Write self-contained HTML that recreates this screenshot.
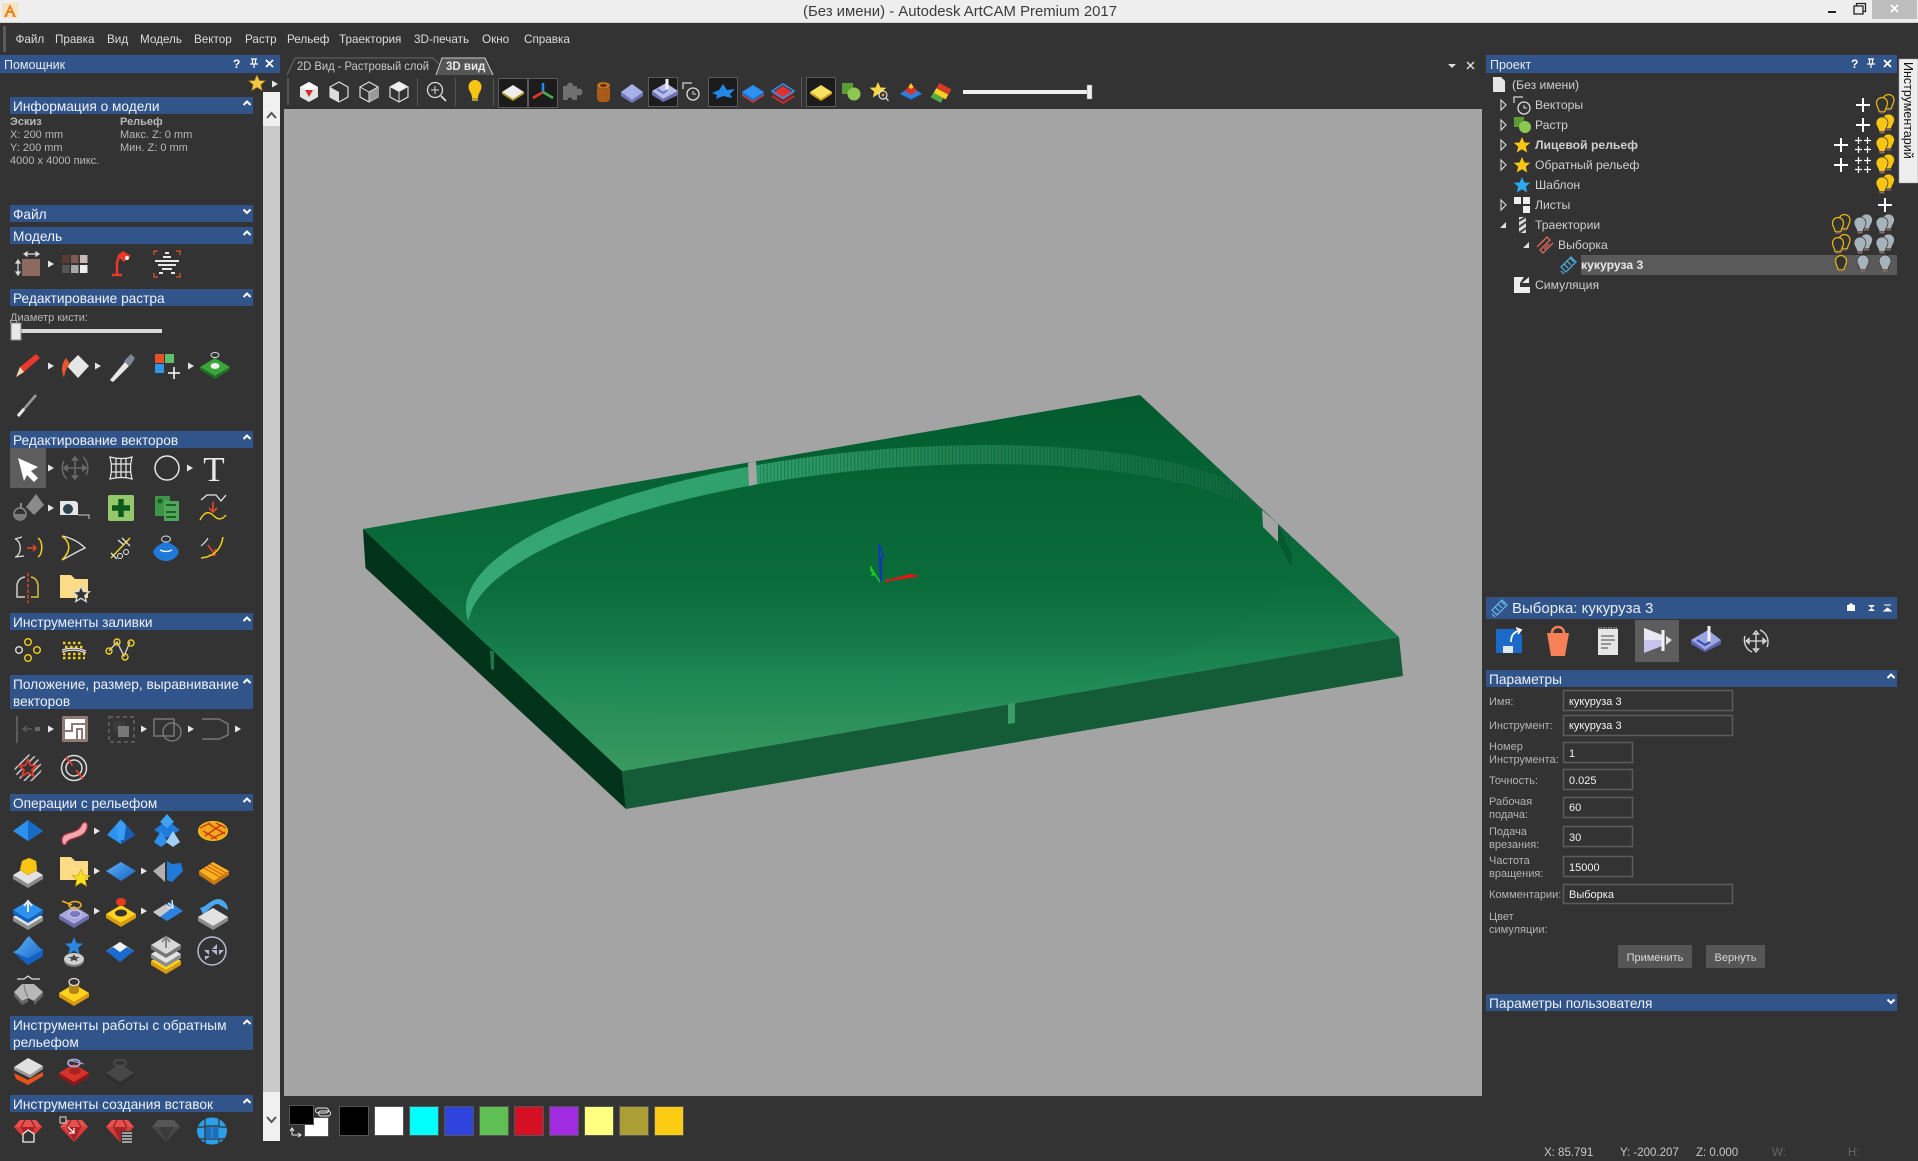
<!DOCTYPE html>
<html lang="ru"><head><meta charset="utf-8"><title>Autodesk ArtCAM Premium 2017</title>
<style>
html,body{margin:0;padding:0;background:#333;width:1918px;height:1161px;overflow:hidden}
svg{display:block;font-family:"Liberation Sans","DejaVu Sans",sans-serif}
.m{font-size:11.7px;fill:#dcdcdc}.h{font-size:13.7px;fill:#eef1f6}.p{font-size:12.5px;fill:#e4e8ee}
.s{font-size:11px;fill:#b8b8b8}.b{font-size:11px;fill:#b8b8b8;font-weight:bold}
.t{font-size:12.2px;fill:#cfcfcf}.l{font-size:11px;fill:#b4b4b4}.v{font-size:11px;fill:#f2f2f2}
.f{fill:none;stroke:#5c5c5c;stroke-width:1.5}
.st{font-size:11.5px;fill:#c8c8c8}
</style></head><body>
<svg width="1918" height="1161" viewBox="0 0 1918 1161">
<defs>
<path id="tri" d="M-3-3.500 3 0-3 3.500z" fill="#e6e6e6"/>
<path id="up" d="M-3.500 2 0-1.500 3.500 2" fill="none" stroke="#fff" stroke-width="2"/>
<path id="dn" d="M-3.500-1.500 0 2 3.500-1.500" fill="none" stroke="#fff" stroke-width="2"/>
<path id="plus" d="M-7 0H7M0-7V7" stroke="#fff" stroke-width="2" fill="none"/>
<path id="plus4" d="M-8-4.500H-1M-4.500-8V-1M1-4.500H8M4.500-8V-1M-8 4.500H-1M-4.500 1V8M1 4.500H8M4.500 1V8" stroke="#fff" stroke-width="1.200" fill="none"/>
<g id="bg"><path d="M-3 5.500C-3 2-6 1-6-3a6 6 0 0 1 12 0C6 1 3 2 3 5.500z" fill="#a6b3ba" stroke="#333" stroke-width=".7"/><rect x="-2.500" y="5.500" width="5" height="2" fill="#8a6a5c"/></g>
<g id="by"><path d="M-3 5.500C-3 2-6 1-6-3a6 6 0 0 1 12 0C6 1 3 2 3 5.500z" fill="#f8c513" stroke="#333" stroke-width=".7"/><rect x="-2.500" y="5.500" width="5" height="2" fill="#8a6a5c"/></g>
<g id="bo"><path d="M-3 5.500C-3 2-5.500 1-5.500-3a5.500 5.500 0 0 1 11 0C5.500 1 3 2 3 5.500z" fill="#333" stroke="#e8b810" stroke-width="1.200"/><rect x="-2.500" y="5.500" width="5" height="2" fill="#8a6a5c"/></g>
<g id="bo2"><use href="#bo" x="3.500" y="-2"/><use href="#bo" x="-3" y="1"/></g>
<g id="by2"><use href="#by" x="3.500" y="-2"/><use href="#by" x="-3" y="1"/></g>
<g id="bg2"><use href="#bg" x="3.500" y="-2"/><use href="#bg" x="-3" y="1"/></g>
<path id="expd" d="M-2-5 3 0-2 5z" fill="#333" stroke="#ddd" stroke-width="1.100"/>
<path id="coll" d="M-3 3 3 3 3-3z" fill="#e0e0e0"/>
<g id="clock"><path d="M-8-3V-9H1" fill="none" stroke="#bbb" stroke-width="1.500"/><circle cx="2" cy="2" r="6" fill="#333" stroke="#ddd" stroke-width="1.300"/><path d="M2-1V2H5" fill="none" stroke="#ddd"/></g>
<path id="star" d="M0-8 2.400-2.500 8.300-2.200 3.800 1.600 5.200 7.500 0 4.300-5.200 7.500-3.800 1.600-8.300-2.200-2.400-2.500z"/>
<path id="gem" d="M-14-4-8-11H8L14-4 0 11z" fill="#d83a38"/>
<g id="gemf"><path d="M-14-4H14L8-11H-8z" fill="#e85050"/><path d="M-7-4 0 11 7-4z" fill="#a82428"/><path d="M-3-11-7-4M3-11 7-4" stroke="#7a1c1c" fill="none"/></g>
<linearGradient id="gt" gradientUnits="userSpaceOnUse" x1="900" y1="395" x2="900" y2="771"><stop offset="0" stop-color="#015a2d"/><stop offset=".36" stop-color="#086838"/><stop offset=".5" stop-color="#0b6c3b"/><stop offset=".64" stop-color="#147a48"/><stop offset=".76" stop-color="#1f8a55"/><stop offset="1" stop-color="#39995f"/></linearGradient>
<linearGradient id="gf" gradientUnits="userSpaceOnUse" x1="900" y1="399" x2="900" y2="775"><stop offset="0" stop-color="#015a2d"/><stop offset=".36" stop-color="#086838"/><stop offset=".5" stop-color="#0b6c3b"/><stop offset=".64" stop-color="#147a48"/><stop offset=".76" stop-color="#1f8a55"/><stop offset="1" stop-color="#39995f"/></linearGradient>
<linearGradient id="gw" gradientUnits="userSpaceOnUse" x1="470" y1="0" x2="1265" y2="0"><stop offset="0" stop-color="#36a876"/><stop offset=".35" stop-color="#2fa06c"/><stop offset=".6" stop-color="#1f8352"/><stop offset="1" stop-color="#0c673b"/></linearGradient>
<pattern id="pst" width="3.500" height="10" patternUnits="userSpaceOnUse"><rect width="1.200" height="10" fill="#054a27" opacity=".35"/></pattern>
<clipPath id="ct"><path d="M363 529 1140 395 1399 637 622 771z"/></clipPath>
<clipPath id="ef"><circle r="1" transform="matrix(412 -34 0 124.400 880 593)"/></clipPath>
<clipPath id="eu"><circle r="1" transform="matrix(412 -34 0 124.400 878 574)"/></clipPath>
<clipPath id="hat"><circle cx="28" cy="768" r="13.500"/></clipPath>
<linearGradient id="blue" x1="0" y1="0" x2="1" y2="1"><stop offset="0" stop-color="#5cb4f8"/><stop offset="1" stop-color="#1560c4"/></linearGradient>
<g id="slabw"><path d="M-15 0 0 9 15 0V4L0 13-15 4z" fill="#8c8c8c"/><path d="M-15 0 0-9 15 0 0 9z" fill="#e2e2e2"/></g>
<g id="slaby"><path d="M-15 0 0 9 15 0V4L0 13-15 4z" fill="#d89a10"/><path d="M-15 0 0-9 15 0 0 9z" fill="#ffd21c"/></g>
<g id="slabb"><path d="M-15 0 0 9 15 0V4L0 13-15 4z" fill="#1263bd"/><path d="M-15 0 0-9 15 0 0 9z" fill="#2b92f0"/></g>
<g id="slabp"><path d="M-15 0 0 9 15 0V4L0 13-15 4z" fill="#6c6caa"/><path d="M-15 0 0-9 15 0 0 9z" fill="#a8a8e0"/></g>
<g id="folder"><path d="M-14-12H-3L1-8H14V11H-14z" fill="#fbdb86"/></g>
</defs>

<!-- base -->
<rect width="1918" height="1161" fill="#333"/>
<rect width="1918" height="23" fill="#eeeeee"/>
<rect y="22" width="1918" height="1" fill="#cfcfcf"/>
<rect x="2" y="3" width="16" height="15" fill="#f6e3c4"/>
<path d="M4 17 10 4 16 17H13L12 13H8L7 17z" fill="#e8841c"/><path d="M9 11h2l-1-3z" fill="#f6e3c4"/>
<text x="960" y="16" text-anchor="middle" font-size="14.500" fill="#3c3c3c" textLength="314" lengthAdjust="spacingAndGlyphs">(Без имени) - Autodesk ArtCAM Premium 2017</text>
<rect x="1828" y="11" width="8" height="2" fill="#222"/>
<path d="M1854 6h9v8h-9zM1856.500 6V3.500h9v8h-2.500" fill="none" stroke="#222" stroke-width="1.300"/>
<rect x="1872" width="45" height="19" fill="#bdbdbd"/><path d="M1891 5l7 7m0-7-7 7" stroke="#fff" stroke-width="1.800"/>

<!-- menu -->
<rect x="3" y="26" width="3" height="26" fill="#5a5a5a"/>
<g>
<text x="15.500" y="43" class="m">Файл</text><text x="55" y="43" class="m">Правка</text><text x="107" y="43" class="m">Вид</text><text x="140" y="43" class="m">Модель</text><text x="194" y="43" class="m">Вектор</text><text x="245" y="43" class="m">Растр</text><text x="287" y="43" class="m">Рельеф</text><text x="339" y="43" class="m">Траектория</text><text x="414" y="43" class="m">3D-печать</text><text x="482" y="43" class="m">Окно</text><text x="524" y="43" class="m">Справка</text>
</g>

<!-- left panel -->
<rect y="55" width="280" height="18" fill="#31558a"/>
<text x="4" y="69" class="p">Помощник</text>
<text x="233" y="68" font-size="12" font-weight="bold" fill="#fff">?</text>
<path d="M251 59h6M252.500 59v5h3v-5M250 64h8M254 64v4" stroke="#fff" stroke-width="1.200" fill="none"/>
<path d="M266 60l7 7m0-7-7 7" stroke="#fff" stroke-width="1.800"/>
<use href="#star" transform="translate(257 83)" fill="#f3c845" stroke="#a87a18" stroke-width=".6"/>
<use href="#tri" x="275" y="84"/>

<!-- scrollbar -->
<rect x="263" y="92" width="17" height="1049" fill="#c9c9c9"/>
<rect x="263" y="92" width="17" height="34" fill="#f0f0f0"/>
<rect x="263" y="1092" width="17" height="49" fill="#f0f0f0"/>
<path d="M267 118l4.500-5 4.500 5" fill="none" stroke="#555" stroke-width="2"/>
<path d="M267 1117l4.500 5 4.500-5" fill="none" stroke="#555" stroke-width="2"/>

<!-- section headers -->
<g fill="#31558a">
<rect x="10" y="97" width="243" height="17"/><rect x="10" y="205" width="243" height="17"/><rect x="10" y="227" width="243" height="17"/><rect x="10" y="289" width="243" height="17"/><rect x="10" y="431" width="243" height="17"/><rect x="10" y="613" width="243" height="17"/><rect x="10" y="675" width="243" height="34"/><rect x="10" y="794" width="243" height="17"/><rect x="10" y="1016" width="243" height="34"/><rect x="10" y="1095" width="243" height="17"/>
</g>
<text x="13" y="111" class="h">Информация о модели</text>
<text x="13" y="219" class="h">Файл</text>
<text x="13" y="241" class="h">Модель</text>
<text x="13" y="303" class="h">Редактирование растра</text>
<text x="13" y="445" class="h">Редактирование векторов</text>
<text x="13" y="627" class="h">Инструменты заливки</text>
<text x="13" y="689" class="h">Положение, размер, выравнивание</text>
<text x="13" y="706" class="h">векторов</text>
<text x="13" y="808" class="h">Операции с рельефом</text>
<text x="13" y="1030" class="h">Инструменты работы с обратным</text>
<text x="13" y="1047" class="h">рельефом</text>
<text x="13" y="1109" class="h">Инструменты создания вставок</text>
<use href="#up" x="247" y="103"/><use href="#dn" x="247" y="211"/><use href="#up" x="247" y="233"/><use href="#up" x="247" y="295"/><use href="#up" x="247" y="437"/><use href="#up" x="247" y="619"/><use href="#up" x="247" y="681"/><use href="#up" x="247" y="800"/><use href="#up" x="247" y="1022"/><use href="#up" x="247" y="1101"/>

<!-- info -->
<text x="10" y="125" class="b">Эскиз</text><text x="120" y="125" class="b">Рельеф</text>
<text x="10" y="138" class="s">X: 200 mm</text><text x="120" y="138" class="s">Макс. Z: 0 mm</text>
<text x="10" y="151" class="s">Y: 200 mm</text><text x="120" y="151" class="s">Мин. Z: 0 mm</text>
<text x="10" y="164" class="s">4000 x 4000 пикс.</text>

<!-- model row -->
<rect x="22" y="259" width="18" height="17" fill="#8a6a5e"/>
<path d="M24 254H39M24 254l3-2v4zM39 254l-3-2v4zM18 260V275M18 260l-2 3h4zM18 275l-2-3h4z" stroke="#d8d8d8" fill="#d8d8d8" stroke-width="1.200"/>
<use href="#tri" x="51" y="264"/>
<rect x="62" y="255" width="7.500" height="8" fill="#5b3a33"/><rect x="71" y="255" width="7.500" height="8" fill="#7e5a50"/><rect x="80" y="255" width="7.500" height="8" fill="#c9b8b4"/>
<rect x="62" y="265" width="7.500" height="8" fill="#555"/><rect x="71" y="265" width="7.500" height="8" fill="#a8a8a8"/><rect x="80" y="265" width="7.500" height="8" fill="#eee"/>
<path d="M112 275H122M117 275V262L120 254" stroke="#e8392a" stroke-width="2.500" fill="none"/><path d="M117 256 123 251 131 256 124 262z" fill="#e8392a"/><circle cx="127" cy="258" r="2" fill="#eee"/>
<path d="M154 255V251H158M176 251H180V255M154 273V277H158M176 277H180V273" stroke="#e2542a" stroke-width="1.300" fill="none"/>
<path d="M165 253h4M163 257h8M155 261h24M158 265h18M162 269h10M159 273h4M171 273h4" stroke="#e8e8e8" stroke-width="2"/>

<!-- raster -->
<text x="10" y="321" class="s">Диаметр кисти:</text>
<rect x="12" y="329" width="150" height="4" fill="#d8d8d8"/>
<rect x="11" y="323" width="10" height="17" fill="#e8e8e8" stroke="#888"/>
<path d="M16 377 20 367 36 354 40 358 24 372z" fill="#e8392a"/><path d="M16 377 20 367 24 372z" fill="#e8d8b0"/>
<use href="#tri" x="51" y="366"/>
<path d="M67 366 78 355 89 366 78 378z" fill="#e6e6e6"/><path d="M66 358C60 366 62 372 64 378 65 372 66 368 70 364z" fill="#e4572a"/>
<use href="#tri" x="98" y="366"/>
<path d="M110 380 125 362 129 366 113 382z" fill="#e8e8e8" stroke="#aaa" stroke-width=".5"/><path d="M124 361 131 354 135 358 130 366z" fill="#7a8a92"/>
<rect x="155" y="354" width="9" height="9" fill="#e6512a"/><rect x="165" y="354" width="9" height="9" fill="#5fbf6a"/><rect x="155" y="364" width="9" height="9" fill="#2f96e8"/>
<path d="M174 367V379M168 373H180" stroke="#fff" stroke-width="1.500"/>
<use href="#tri" x="191" y="366"/>
<path d="M200 367 215 358 230 367 215 376z" fill="#3aa53a"/><path d="M200 367 215 376 230 367V370L215 379 200 370z" fill="#1e6c26"/><ellipse cx="215" cy="366" rx="4.500" ry="3" fill="#eee"/><ellipse cx="215" cy="355" rx="4" ry="2.500" fill="none" stroke="#ddd"/>
<path d="M18 416 36 395" stroke="#9a9a9a" stroke-width="2.500"/><path d="M18 416 24 409" stroke="#eee" stroke-width="3"/>

<!-- vector row1 -->
<rect x="10" y="448" width="36" height="40" fill="#5d5d5d"/>
<path d="M18 458 38 467 31 471 38 478 34 482 27 475 24 481z" fill="#fff"/>
<use href="#tri" x="51" y="468"/>
<g stroke="#6a6a6a" stroke-width="1.500" fill="none"><path d="M75 458V478M65 468H85M75 457l-2.500 3h5zM75 479l-2.500-3h5zM64 468l3-2.500v5zM86 468l-3-2.500v5z"/><path d="M83 457A15 15 0 0 1 86 475M67 479A15 15 0 0 1 64 461"/></g>
<g stroke="#e8e8e8" stroke-width="1.200" fill="none"><path d="M110 457C117 459 126 459 132 457 130 465 130 472 132 479 126 477 117 477 110 479 112 472 112 465 110 457z"/><path d="M111 464H131M111 472H131M116 458V478M121 458V478M126 458V478"/></g>
<circle cx="167" cy="468" r="12" fill="none" stroke="#e6e6e6" stroke-width="1.500"/>
<use href="#tri" x="190" y="468"/>
<text x="214" y="481" text-anchor="middle" font-family="Liberation Serif,serif" font-size="35" fill="#e8e8e8">T</text>

<!-- row 2 -->
<path d="M26 507 36 494 44 505 34 515z" fill="#8a8a8a"/><path d="M21 503V513" stroke="#8a8a8a" stroke-width="2"/><circle cx="20" cy="514" r="6" fill="#333" stroke="#8a8a8a" stroke-width="1.500"/><path d="M14 514a6 6 0 0 0 12 0z" fill="#7a7a7a"/>
<use href="#tri" x="51" y="508"/>
<path d="M60 501H74Q78 501 78 505V515H60z" fill="#e6e6e6"/><circle cx="68" cy="509" r="5" fill="#2c4250"/><path d="M78 515H89V519" stroke="#aaa" fill="none" stroke-width="1.300"/>
<rect x="108" y="495" width="26" height="26" rx="2" fill="#95c86c"/><path d="M121 499V517M112 508H130" stroke="#0c5a1c" stroke-width="5.500"/>
<rect x="155" y="496" width="15" height="20" fill="#3d9548"/><rect x="164" y="501" width="15" height="20" fill="#4fa85a"/><circle cx="160" cy="501" r="2.500" fill="#1e6028"/><path d="M166 505h10M166 512h10M166 517h10" stroke="#1e6028" stroke-width="2"/>
<path d="M201 500 207 495H216L221 501 226 495" stroke="#e6e6e6" stroke-width="1.300" fill="none"/><path d="M213 502V512M209 508l4 4 4-4" stroke="#e8482a" stroke-width="1.600" fill="none"/><path d="M200 520C205 510 210 512 214 516S222 520 226 515" stroke="#f2d21c" stroke-width="1.400" fill="none"/>

<!-- row 3 -->
<path d="M15 539C22 541 22 555 15 557M15 539 22 537M15 557 24 556" stroke="#ddd" stroke-width="1.300" fill="none"/><path d="M27 548H36M33 545l3 3-3 3" stroke="#e8482a" stroke-width="1.500" fill="none"/><path d="M38 538C43 541 43 554 38 557" stroke="#f2d21c" stroke-width="1.500" fill="none"/>
<path d="M62 536C72 538 80 543 85 548 78 551 70 556 62 560" stroke="#e6e6e6" stroke-width="1.300" fill="none"/><path d="M62 536C70 542 72 550 62 560" stroke="#f2d21c" stroke-width="1.500" fill="none"/>
<path d="M111 558 130 538" stroke="#f2d21c" stroke-width="1.500"/><path d="M122 538l8 8M111 553l6 6M118 540l6 5" stroke="#e6e6e6" stroke-width="1.300"/><circle cx="126" cy="552" r="2.500" fill="none" stroke="#e6e6e6"/><circle cx="120" cy="556" r="2.500" fill="none" stroke="#e6e6e6"/>
<path d="M153 552C155 546 161 544 166 541 171 544 177 546 179 552 177 558 171 561 166 561S155 558 153 552z" fill="#1f79d8"/><path d="M160 550Q166 553 172 550" stroke="#fff" stroke-width="1.300" fill="none"/><ellipse cx="166" cy="539" rx="4.500" ry="3" fill="none" stroke="#ddd"/>
<path d="M201 546C204 543 206 542 208 538" stroke="#ddd" stroke-width="1.200" fill="none"/><path d="M208 545 215 555M215 549V555H209" stroke="#e8482a" stroke-width="1.500" fill="none"/><path d="M201 558C213 557 221 550 223 537" stroke="#f2d21c" stroke-width="1.500" fill="none"/>

<!-- row 4 -->
<path d="M28 573V603" stroke="#c8401c" stroke-width="1.800" stroke-dasharray="3.500 2"/><path d="M25 597H17V585Q18 578 25 577" stroke="#cfcfcf" stroke-width="1.500" fill="none"/><path d="M31 597H38V585Q37 578 31 577" stroke="#d8c040" stroke-width="1.500" fill="none"/>
<use href="#folder" transform="translate(74 587)"/><use href="#star" transform="translate(81 594)" fill="#333" stroke="#ddd" stroke-width="1.300"/>

<!-- fill tools -->
<g fill="none" stroke-width="1.400"><circle cx="19" cy="650" r="3.300" stroke="#ddd"/><circle cx="28" cy="642" r="3.300" stroke="#f2d21c"/><circle cx="37" cy="650" r="3.300" stroke="#f2d21c"/><circle cx="28" cy="658" r="3.300" stroke="#f2d21c"/>
<path d="M62 650Q74 646 86 651" stroke="#ddd"/><path d="M62 652Q74 648 86 653" stroke="#ddd"/>
<path d="M109 651 117 642 124 656 130 642" stroke="#ccc"/><circle cx="109" cy="651" r="3" stroke="#f2d21c"/><circle cx="117" cy="642" r="3" stroke="#f2d21c"/><circle cx="125" cy="657" r="3" stroke="#f2d21c"/><circle cx="131" cy="643" r="3" stroke="#f2d21c"/></g>
<path d="M63 643h20M65 647h20M63 654h22M63 658h22" stroke="#f2d21c" stroke-width="2.600" stroke-dasharray="2.500 2.500"/>

<!-- position row -->
<path d="M17 716V743" stroke="#6a6a6a" stroke-width="1.500"/><path d="M32 729H24M27 726l-4 3 4 3" stroke="#5f5f5f" stroke-width="1.300" fill="none"/><rect x="35" y="727" width="5" height="4" fill="#6a6a6a"/>
<use href="#tri" x="51" y="729"/>
<rect x="62" y="716" width="26" height="26" rx="1.500" fill="#8f7a73"/><rect x="65" y="719" width="20" height="20" fill="#fff"/><path d="M65 731H72V724H85M77 739V729H82V739" stroke="#8f7a73" stroke-width="2" fill="none"/>
<rect x="109" y="717" width="25" height="25" fill="none" stroke="#666" stroke-width="1.500" stroke-dasharray="4 3"/><rect x="113" y="721" width="12" height="12" fill="#3c3c3c"/><rect x="118" y="726" width="11" height="11" fill="#777"/>
<use href="#tri" x="144" y="729"/>
<rect x="154" y="719" width="20" height="17" fill="none" stroke="#777" stroke-width="1.500"/><circle cx="172" cy="732" r="9" fill="none" stroke="#777" stroke-width="1.500"/>
<use href="#tri" x="191" y="729"/>
<path d="M202 719H219L228 724V735L219 739H202" stroke="#777" stroke-width="1.500" fill="none"/>
<use href="#tri" x="238" y="729"/>
<g clip-path="url(#hat)"><path d="M14 770 30 754M14 777 37 754M17 781 42 756M22 783 43 762M29 783 43 769" stroke="#ccc" stroke-width="1.500"/></g><use href="#star" transform="translate(28 768) scale(1.050)" fill="#333" stroke="#e83a2a" stroke-width="1.600"/>
<g fill="none" stroke="#ddd" stroke-width="1.500"><circle cx="74" cy="768" r="12.500"/><circle cx="74" cy="768" r="8"/></g><path d="M66 757 83 779" stroke="#e83a2a" stroke-width="1.800"/><path d="M72 766 76 770" stroke="#333" stroke-width="3"/>

<!-- ops row 1 y=831 -->
<path d="M13 831 28 820 43 831 28 841z" fill="#2c90ee"/><path d="M28 820 43 831 28 841z" fill="#176cc6"/>
<path d="M62 840C62 830 78 836 82 824 86 820 88 824 87 828 84 840 68 836 66 844 64 846 62 844 62 840z" fill="#f0a8ae" stroke="#b83444" stroke-width="1.200"/>
<use href="#tri" x="97" y="831"/>
<path d="M107 835 121 819 135 835 121 844z" fill="#2c90ee"/><path d="M121 819 135 835 121 844z" fill="#155db8"/><path d="M116 826Q121 816 126 826L124 840H118z" fill="#3c9cf2"/>
<path d="M154 830 167 820 180 830 167 838z" fill="#1f7ada"/><path d="M160 822 167 814 174 822 167 828z" fill="#3fa2f6"/><path d="M154 842 161 831 168 842 161 847z" fill="#2c90ee"/><path d="M166 842 173 831 180 842 173 847z" fill="#a5d0f6"/>
<g transform="translate(213 831)"><ellipse rx="14.500" ry="9.500" fill="#f2a81c"/><path d="M-13-3-3-8M-8 5 8-6M-2 8 12 1M-10 0 4 8M-4-7 12 3M3-8 13-3" stroke="#c83c10" stroke-width="1.500"/><ellipse rx="14.500" ry="9.500" fill="none" stroke="#f8c220"/></g>

<!-- ops row 2 y=871 -->
<use href="#slabw" transform="translate(28 875)"/><path d="M20 870 22 861 29 858 36 861 37 870 28 875z" fill="#f8c513" stroke="#c89410" stroke-width=".5"/>
<use href="#folder" transform="translate(74 869)"/><use href="#star" transform="translate(81 878) scale(1.100)" fill="#f8de20" stroke="#b89410" stroke-width=".5"/>
<use href="#tri" x="97" y="871"/>
<path d="M106 871 121 862 136 871 121 881z" fill="url(#blue)"/>
<use href="#tri" x="144" y="871"/>
<path d="M153 871 165 862V882z" fill="#b0b0b0"/><path d="M167 861 172 864 181 863 183 871 172 882 167 880z" fill="#1f7ada"/>
<path d="M199 871 213 862 229 871 214 881z" fill="#f8b420"/><path d="M199 871 214 881V885L199 875zM229 871 214 881V885L229 875z" fill="#c87810"/><path d="M204 868 220 877M207 866 223 875M210 864 226 873" stroke="#d86010" stroke-width="1.200"/>

<!-- ops row 3 y=911 -->
<use href="#slabw" transform="translate(28 917)"/><use href="#slabb" transform="translate(28 910)"/><path d="M28 912V902M24 906l4-5 4 5" stroke="#e8e8e8" stroke-width="2" fill="none"/>
<use href="#slabp" transform="translate(74 915)"/><ellipse cx="75" cy="914" rx="6" ry="3.500" fill="#7a7ac0" stroke="#eee" stroke-width=".6"/><ellipse cx="75" cy="905" rx="6" ry="3.500" fill="none" stroke="#f2b21c" stroke-width="1.500"/><path d="M62 901 72 905" stroke="#f2b21c" stroke-width="1.500"/>
<use href="#tri" x="97" y="911"/>
<use href="#slaby" transform="translate(121 914)"/><ellipse cx="121" cy="913" rx="6" ry="3.500" fill="#333"/><ellipse cx="121" cy="902" rx="5" ry="4" fill="#e83a1c"/>
<use href="#tri" x="144" y="911"/>
<path d="M153 912 170 902 183 911 167 921z" fill="#2b82e0"/><path d="M153 912 166 904 172 908 160 917z" fill="#c8c8c8"/><path d="M168 903 173 907M172 900l1 8-6-1" stroke="#eee" stroke-width="1.300" fill="none"/>
<use href="#slabw" transform="translate(213 917)"/><path d="M200 908C206 907 210 900 218 899 224 899 228 905 228 910L218 904C212 904 208 912 203 914z" fill="#4ca8f2"/>

<!-- ops row 4 y=950 -->
<path d="M13 952C20 950 24 940 29 936 33 940 37 946 43 950V956L28 965z" fill="url(#blue)"/>
<path d="M28 965 43 956V950L28 958 13 952z" fill="#1560c4"/>
<use href="#star" transform="translate(74 946) scale(1.100)" fill="#2b86e2"/><ellipse cx="74" cy="959" rx="10" ry="6" fill="#cfcfcf"/><path d="M64 959a10 6 0 0 0 20 0V961a10 6 0 0 1-20 0z" fill="#777"/><use href="#star" transform="translate(74 958) scale(.7 .45)" fill="#444"/>
<path d="M106 951 120 942 134 951 120 960z" fill="#eee"/><path d="M106 951 113 947 120 951 127 947 134 951 120 962z" fill="#1a6ad0"/><path d="M113 947 120 942 127 947 120 952z" fill="#f2f2f2"/>
<use href="#slaby" transform="translate(166 961)"/><use href="#slabw" transform="translate(166 954)"/><path d="M151 945 166 936 181 945 166 954z" fill="#d8d8d8"/><path d="M151 945 166 954 181 945V949L166 958 151 949z" fill="#777"/><path d="M166 948V938M162 942l4-5 4 5" stroke="#888" stroke-width="2" fill="none"/>
<circle cx="212" cy="951" r="14" fill="none" stroke="#b8b8d8" stroke-width="1.500"/><path d="M204 950h5v5zM211 950h6v5zM205 956h5l-5 4zM212 956h6zM217 944v5h-5zM219 950h5l-5 5z" fill="#b8b8d8"/>

<!-- ops row 5 y=990 -->
<path d="M14 992 22 984H34L43 992 34 1001 28 998 22 1001z" fill="#b8b8b8"/><path d="M14 992 22 1001 28 998V1002L22 1005 14 996zM43 992 34 1001V1005L43 996z" fill="#666"/><path d="M17 979H24L28 976 32 979H40" stroke="#ddd" stroke-width="1.300" fill="none"/><path d="M24 984Q24 990 28 997" stroke="#777" fill="none"/>
<use href="#slaby" transform="translate(74 993)"/><ellipse cx="74" cy="991" rx="5" ry="3" fill="#a87818"/><path d="M69 982V990a5 3 0 0 0 10 0V982" fill="#b88418"/><ellipse cx="74" cy="982" rx="5" ry="3.500" fill="#333" stroke="#ddd" stroke-width="1.300"/>

<!-- reverse -->
<path d="M14 1067 28 1058 43 1066 30 1075z" fill="#e0e0e0"/><path d="M14 1067 30 1075V1078L14 1070zM43 1066 30 1075V1078L43 1069z" fill="#999"/><path d="M14 1073 28 1080 43 1072V1076L28 1085 16 1079z" fill="#e8501c"/>
<path d="M59 1073 74 1064 89 1073 74 1082z" fill="#d8322a"/><path d="M59 1073 74 1082 89 1073V1077L74 1086 59 1077z" fill="#8a1a1a"/><ellipse cx="75" cy="1071" rx="6" ry="3.500" fill="#a82420"/><ellipse cx="74" cy="1063" rx="6" ry="3.500" fill="none" stroke="#a8a8d8" stroke-width="1.800"/><path d="M68 1060 84 1064" stroke="#a8a8d8" stroke-width="1"/>
<path d="M106 1073 120 1064 134 1073 120 1082z" fill="#474747"/><path d="M106 1073 120 1082 134 1073V1077L120 1086 106 1077z" fill="#2e2e2e"/><ellipse cx="120" cy="1063" rx="6" ry="3.500" fill="none" stroke="#4c4c4c" stroke-width="1.800"/>

<!-- inserts -->
<g transform="translate(28 1131)"><use href="#gem"/><use href="#gemf"/><path d="M-5 11V3L0-1 6 3V11z" fill="#333" stroke="#eee" stroke-width="1.300"/></g>
<g transform="translate(74 1131)"><use href="#gem"/><use href="#gemf"/><rect x="-14" y="-14" width="6" height="6" fill="#333" stroke="#ddd"/><path d="M-6-4 0 2M0-3V2H-5" stroke="#eee" stroke-width="1.300" fill="none"/></g>
<g transform="translate(120 1131)"><use href="#gem"/><use href="#gemf"/><rect x="1" y="0" width="12" height="12" fill="#333"/><path d="M2 2H12M2 5H12M2 8H12M2 11H12" stroke="#ddd" stroke-width="1.300"/></g>
<g transform="translate(166 1131)" opacity=".9"><path d="M-14-4-8-11H8L14-4 0 11z" fill="#4a4a4a"/><path d="M-14-4H14L8-11H-8z" fill="#5a5a5a"/><path d="M-7-4 0 11 7-4z" fill="#3c3c3c"/></g>
<ellipse cx="212" cy="1131" rx="15" ry="13.500" fill="#2d9fe8"/><path d="M205 1118V1126H219V1118M197 1127H205V1139H197M219 1127H227M219 1139H227M205 1139V1145M219 1139V1145M205 1139H219" stroke="#333" stroke-width="1.200" fill="none"/><rect x="205.500" y="1127" width="6" height="12" fill="#1f6fb8"/><rect x="212.500" y="1127" width="6" height="12" fill="#1f6fb8"/>

<!-- viewport -->
<rect x="284" y="109" width="1198" height="987" fill="#a4a4a4"/>
<g>
<path d="M363 529 622 771 626 809 365.500 568z" fill="#003319"/>
<path d="M622 771 1399 637 1403 676 626 809z" fill="#145b38"/>
<path d="M363 529 1140 395 1399 637 622 771z" fill="url(#gt)"/>
<g clip-path="url(#ct)">
<g clip-path="url(#eu)"><rect x="440" y="400" width="880" height="340" fill="url(#gw)"/><rect x="760" y="400" width="560" height="200" fill="url(#pst)"/></g>
<g clip-path="url(#ef)"><rect x="440" y="440" width="880" height="300" fill="url(#gf)"/></g>
</g>
<path d="M748 463 756 461 757 484 749 486z" fill="#a4a4a4"/>
<path d="M1262 510 1278 524 1278 542 1263 527z" fill="#a4a4a4"/>
<path d="M1278 524 1292 555 1291 567 1278 542z" fill="#075a2f"/>
<path d="M1008 704 1015 703 1015 723 1008 724z" fill="#3a9c66"/>
<path d="M490 650 494 652 494 670 491 669z" fill="#1c7a4a"/>
</g>
<!-- axes -->
<path d="M880.500 581 879 544 884 557 881 557 881 581z" fill="none" stroke="#1a2ad8" stroke-width="1.300"/>
<path d="M884 581 910 574 920 576 884 582z" fill="#f01010"/><path d="M886 580 918 576" stroke="#f01010" stroke-width="1.500" stroke-dasharray="2 1.500"/>
<path d="M880 582 871 568 874 572M871 566V572" stroke="#1fd01f" stroke-width="1.300" fill="none"/><path d="M873 571 876 575 871 576z" fill="#1fd01f"/>

<!-- tabs -->
<path d="M287 75 295 58H433L439 64" fill="none" stroke="#6a6a6a"/>
<text x="297" y="70" style="font-size:12px;fill:#c8c8c8" textLength="132" lengthAdjust="spacingAndGlyphs">2D Вид - Растровый слой</text>
<path d="M436 75 442 58H485L493 75z" fill="#555"/><path d="M436 75 442 58H485L493 75" fill="none" stroke="#ccc"/>
<text x="446" y="70" style="font-size:11.500px;fill:#e8e8e8;font-weight:bold">3D вид</text>
<path d="M1448 64h8l-4 4z" fill="#ddd"/><path d="M1467 62l7 7m0-7-7 7" stroke="#ddd" stroke-width="1.500"/>

<!-- toolbar -->
<rect x="287" y="78" width="2" height="27" fill="#555"/>
<g transform="translate(309 92)"><path d="M0-10 9-5V5L0 10-9 5V-5z" fill="#e4e4e4"/><path d="M0-10 9-5 0 0-9-5z" fill="#fff"/><path d="M-4-2 4-2 0 5z" fill="#d8302a"/></g>
<g transform="translate(339 92)"><path d="M0-10 9-5V5L0 10-9 5V-5z" fill="#333" stroke="#ddd" stroke-width="1.200"/><path d="M-9-5 0 0V10L-9 5z" fill="#ddd"/></g>
<g transform="translate(369 92)"><path d="M0-10 9-5V5L0 10-9 5V-5z" fill="#333" stroke="#ddd" stroke-width="1.200"/><path d="M9-5 0 0V10L9 5z" fill="#999"/><path d="M-9-5 0 0 9-5M0 0V10" stroke="#ddd" fill="none"/></g>
<g transform="translate(399 92)"><path d="M0-10 9-5V5L0 10-9 5V-5z" fill="#333" stroke="#ddd" stroke-width="1.200"/><path d="M0-10 9-5 0 0-9-5z" fill="#f0f0f0"/><path d="M0 0V10" stroke="#ddd"/></g>
<rect x="417" y="78" width="1" height="28" fill="#555"/>
<circle cx="435" cy="90" r="7.500" fill="none" stroke="#ddd" stroke-width="1.300"/><path d="M431 90H439M435 86V94" stroke="#ddd"/><path d="M441 96l5 5" stroke="#ddd" stroke-width="1.800"/>
<rect x="455" y="78" width="1" height="28" fill="#555"/>
<path d="M472 98C472 93 468.500 91 468.500 87a6.500 7 0 0 1 13 0C481.500 91 478 93 478 98z" fill="#f8c513"/><rect x="472" y="98" width="6" height="3" fill="#a8a030"/>
<rect x="493" y="78" width="1" height="28" fill="#555"/>
<rect x="498.500" y="78.500" width="29" height="29" fill="#1c1c1c" stroke="#5a5a5a"/>
<path d="M502 92 513 85 524 92 513 99z" fill="#eeeeee"/><path d="M502 92 513 99 524 92V94L513 101 502 94z" fill="#b0a018"/>
<rect x="528.500" y="78.500" width="29" height="29" fill="#1c1c1c" stroke="#5a5a5a"/>
<path d="M543 92V83" stroke="#2090f0" stroke-width="2.500"/><path d="M543 92 533 98" stroke="#e03a2a" stroke-width="2.500"/><path d="M543 92 553 98" stroke="#48b048" stroke-width="2.500"/>
<rect x="563" y="86" width="14" height="14" fill="#707070"/><circle cx="579" cy="92" r="3.500" fill="#707070"/><circle cx="570" cy="85.500" r="3" fill="#707070"/><circle cx="570" cy="100" r="2.500" fill="#333"/>
<rect x="597" y="84" width="13" height="18" rx="4" fill="#a85c18"/><ellipse cx="603.500" cy="85.500" rx="6.500" ry="3.500" fill="#c87a28" stroke="#7a3c0c" stroke-width=".6"/><ellipse cx="603.500" cy="85.500" rx="3.500" ry="1.800" fill="#6a3408"/>
<path d="M621 92 632 84 643 92 632 100z" fill="#a8b0e8"/><path d="M621 92 632 100V103L621 96zM643 92 632 100V103L643 96z" fill="#7078c0"/>
<rect x="648.500" y="77.500" width="29" height="29" fill="#1c1c1c" stroke="#5a5a5a"/>
<path d="M652 91 666 83 678 91 663 99z" fill="#b8bce8"/><path d="M652 91 663 99V102L652 95zM678 91 663 99V102L678 95z" fill="#6c70b4"/><path d="M667 79V92" stroke="#f0f0f0" stroke-width="3"/><path d="M657 89 663 93 668 90" stroke="#7078c8" stroke-width="2" fill="none"/>
<use href="#clock" transform="translate(691 92)"/>
<rect x="708.500" y="77.500" width="29" height="29" fill="#1c1c1c" stroke="#5a5a5a"/>
<path d="M712 93 719 90 723 84 727 90 735 89 730 94 732 98 723 96 716 99 717 95z" fill="#2188e8"/>
<path d="M742 92 753 85 764 92 753 99z" fill="#2b92f0"/><path d="M742 92 753 99 764 92V95L753 102 742 95z" fill="#176cc6"/><path d="M742 95 753 102 764 95" stroke="#d8322a" stroke-width="1.500" fill="none"/>
<path d="M772 93 783 86 794 93 783 100z" fill="#e03030"/><path d="M772 91 783 84 794 91 783 98z" fill="none" stroke="#2b92f0" stroke-width="1.600"/><path d="M772 96 783 103 794 96" stroke="#c82a2a" stroke-width="2" fill="none"/>
<rect x="801" y="77" width="1" height="30" fill="#555"/>
<rect x="806.500" y="77.500" width="29" height="29" fill="#1c1c1c" stroke="#5a5a5a"/>
<path d="M810 92 821 85 832 92 821 99z" fill="#f8e060"/><path d="M810 92 821 99 832 92V94L821 101 810 94z" fill="#d8a018"/>
<rect x="842" y="83" width="11" height="11" fill="#5c9c34"/><circle cx="854" cy="94" r="6.500" fill="#8cc850"/>
<use href="#star" transform="translate(878 90)" fill="#f8d84a"/><circle cx="883" cy="95" r="4" fill="#333" stroke="#ddd" stroke-width="1.200"/><circle cx="883" cy="95" r="1.500" fill="#d8a018"/><path d="M886 98l2.500 3" stroke="#ddd" stroke-width="1.300"/>
<path d="M900 94 911 86 922 94 911 99z" fill="#2b82e0"/><path d="M905 91 911 83 917 91 911 95z" fill="#d8322a"/><path d="M908.500 87 911 83 913.500 87 911 89z" fill="#f8d020"/><path d="M900 94 911 99 922 94 911 100z" fill="#1560b0"/>
<path d="M932 95 942 100.500" stroke="#50a848" stroke-width="5.500"/><path d="M935 90.500 947 97" stroke="#f8d020" stroke-width="5.500"/><path d="M938 85.500 950 92" stroke="#d83a2a" stroke-width="6"/>
<rect x="963" y="90" width="124" height="4" fill="#f0f0f0"/><rect x="1087" y="85" width="5" height="14" fill="#f0f0f0" stroke="#888" stroke-width=".5"/>

<!-- palette -->
<rect x="304.500" y="1117.500" width="24" height="19" fill="#fff" stroke="#555"/>
<rect x="289.500" y="1105.500" width="24" height="19" fill="#000" stroke="#555"/>
<path d="M318 1108h8a2.500 2.500 0 0 1 0 5h-8a2.500 2.500 0 0 1 0-5zM321 1111h7a2.500 2.500 0 0 1 0 5h-7a2.500 2.500 0 0 1 0-5z" fill="none" stroke="#eee"/>
<path d="M292 1135H300M292 1135V1129M290 1131l2-3 2 3M298 1133l3 2-3 2" stroke="#eee" fill="none"/>
<g stroke="#555" stroke-width="1">
<rect x="339.500" y="1106.500" width="29" height="29" fill="#000"/><rect x="374.500" y="1106.500" width="29" height="29" fill="#fff"/><rect x="409.500" y="1106.500" width="29" height="29" fill="#0ff"/><rect x="444.500" y="1106.500" width="29" height="29" fill="#2f44dd"/><rect x="479.500" y="1106.500" width="29" height="29" fill="#5fbf52"/><rect x="514.500" y="1106.500" width="29" height="29" fill="#d61024"/><rect x="549.500" y="1106.500" width="29" height="29" fill="#a02bdf"/><rect x="584.500" y="1106.500" width="29" height="29" fill="#ffff80"/><rect x="619.500" y="1106.500" width="29" height="29" fill="#aa9e35"/><rect x="654.500" y="1106.500" width="29" height="29" fill="#fccc14"/>
</g>

<!-- project panel -->
<rect x="1486" y="55" width="411" height="18" fill="#31558a"/>
<text x="1490" y="69" class="p">Проект</text>
<text x="1851" y="68" font-size="12" font-weight="bold" fill="#fff">?</text>
<path d="M1868 59h6M1869.500 59v5h3v-5M1867 64h8M1871 64v4" stroke="#fff" stroke-width="1.200" fill="none"/>
<path d="M1884 60l7 7m0-7-7 7" stroke="#fff" stroke-width="1.800"/>
<rect x="1899" y="59" width="19" height="124" fill="#eee" stroke="#999" stroke-width=".5"/>
<text transform="translate(1904 62) rotate(90)" font-size="12.500" fill="#111">Инструментарий</text>

<rect x="1581" y="255" width="316" height="20" fill="#5a5a5a"/>
<path d="M1493 77H1501L1505 81V92H1493z" fill="#e6e6e6"/>
<text x="1512" y="89" class="t">(Без имени)</text>
<use href="#expd" x="1503" y="105"/><use href="#clock" transform="translate(1522 106)"/><text x="1535" y="109" class="t">Векторы</text>
<use href="#expd" x="1503" y="125"/><rect x="1514" y="117" width="10" height="10" fill="#5c9c34"/><circle cx="1525" cy="127" r="6" fill="#8cc850"/><text x="1535" y="129" class="t">Растр</text>
<use href="#expd" x="1503" y="145"/><use href="#star" transform="translate(1522 145)" fill="#f8c513"/><text x="1535" y="149" class="t" style="font-weight:bold">Лицевой рельеф</text>
<use href="#expd" x="1503" y="165"/><use href="#star" transform="translate(1522 165)" fill="#f8c513"/><text x="1535" y="169" class="t">Обратный рельеф</text>
<use href="#star" transform="translate(1522 185)" fill="#2ea8f0"/><text x="1535" y="189" class="t">Шаблон</text>
<use href="#expd" x="1503" y="205"/><rect x="1514" y="197" width="7" height="7" fill="#eee"/><rect x="1523" y="197" width="7" height="7" fill="#eee"/><rect x="1523" y="206" width="7" height="7" fill="#eee"/><text x="1535" y="209" class="t">Листы</text>
<use href="#coll" x="1503" y="225"/><path d="M1519 217H1526V233H1519z" fill="#ddd"/><path d="M1519 221 1526 217M1519 227 1526 222M1519 233 1526 228" stroke="#444" stroke-width="2"/><text x="1535" y="229" class="t">Траектории</text>
<use href="#coll" x="1526" y="245"/><g stroke="#e0685a" stroke-width="1.300" fill="none" transform="translate(1545 245)"><path d="M-8 2 2-8 5-5-5 5-2 8 8-2"/><path d="M-5-1 -1-5M-1 4 4-1"/></g><text x="1558" y="249" class="t">Выборка</text>
<g stroke="#4aa8d8" stroke-width="1.300" fill="none" transform="translate(1569 265)"><path d="M-8 2 2-8 7-3-3 7z"/><path d="M-5-1-1 3M-2-4 2 0M1-7 5-3M-8 6-5 9"/></g><text x="1581" y="269" class="t" style="font-weight:bold;fill:#e8e8e8">кукуруза 3</text>
<path d="M1514 277V293H1530V287H1520V283L1524 277z" fill="#eee"/><path d="M1522 283 1529 277V283z" fill="#eee"/><text x="1535" y="289" class="t">Симуляция</text>

<use href="#plus" x="1863" y="105"/><use href="#bo2" x="1885" y="105"/>
<use href="#plus" x="1863" y="125"/><use href="#by2" x="1885" y="125"/>
<use href="#plus" x="1841" y="145"/><use href="#plus4" x="1863" y="145"/><use href="#by2" x="1885" y="145"/>
<use href="#plus" x="1841" y="165"/><use href="#plus4" x="1863" y="165"/><use href="#by2" x="1885" y="165"/>
<use href="#by2" x="1885" y="185"/>
<use href="#plus" x="1885" y="205"/>
<use href="#bo2" x="1841" y="225"/><use href="#bg2" x="1863" y="225"/><use href="#bg2" x="1885" y="225"/>
<use href="#bo2" x="1841" y="245"/><use href="#bg2" x="1863" y="245"/><use href="#bg2" x="1885" y="245"/>
<use href="#bo" x="1841" y="264"/><use href="#bg" x="1863" y="264"/><use href="#bg" x="1885" y="264"/>

<!-- toolpath panel -->
<rect x="1486" y="597" width="411" height="22" fill="#31558a"/>
<g stroke="#6ab8e8" stroke-width="1.200" fill="none" transform="translate(1500 608)"><path d="M-8 2 2-8 7-3-3 7z"/><path d="M-5-1-1 3M-2-4 2 0M1-7 5-3M-8 6-5 9"/></g>
<text x="1512" y="613" font-size="15" fill="#e8ecf2">Выборка: кукуруза 3</text>
<path d="M1851 603l4 3v5h-8v-5z" fill="#fff"/><rect x="1847" y="605" width="8" height="6" fill="#fff"/>
<path d="M1868 605h7l-3.500 3zM1868 611h7l-3.500-3z" fill="#fff"/><path d="M1884 605h7M1884 611h7l-3.500-3z" stroke="#fff" fill="#fff"/>
<path d="M1496 629H1514L1522 635V653H1496z" fill="#1b6ac8"/><rect x="1503" y="646" width="10" height="7" fill="#dfe8f0"/><path d="M1511 642C1511 635 1514 632 1520 630M1516 628l5 2-3 4" stroke="#fff" stroke-width="1.800" fill="none"/>
<path d="M1547 633H1569L1565 656H1551z" fill="#f88058"/><path d="M1552 633C1552 625 1564 625 1564 633" stroke="#f88058" stroke-width="2.500" fill="none"/>
<rect x="1598" y="629" width="20" height="26" fill="#e6e6e6"/><path d="M1598 628h20" stroke="#888" stroke-width="2" stroke-dasharray="1.500 1"/><path d="M1601 636H1614M1601 640H1615M1601 644H1611M1601 648H1608" stroke="#666" stroke-width="1.300"/>
<rect x="1635" y="620" width="44" height="42" fill="#5d5d5d"/>
<path d="M1644 628 1662 635V646L1644 653z" fill="#c4c4ec"/><path d="M1644 628 1662 635V640H1644z" fill="#e8e8f4"/><path d="M1663 630V651" stroke="#f2f2f2" stroke-width="3"/><path d="M1666 636 1672 640 1666 645z" fill="#e0e0e0"/>
<path d="M1691 640 1708 630 1721 640 1705 650z" fill="#9ca4e0"/><path d="M1691 640 1705 650V652L1691 644zM1721 640 1705 650V652L1721 644z" fill="#5c64b0"/><path d="M1709 626V642" stroke="#f0f0f0" stroke-width="3"/><path d="M1697 640 1705 645 1710 642" stroke="#3848b0" stroke-width="2" fill="none"/>
<g stroke="#ddd" stroke-width="1.300" fill="none"><path d="M1756 633V650M1747.500 641H1764.500M1756 631l-2.500 3h5zM1756 652l-2.500-3h5zM1746 641l3-2.500v5zM1766 641l-3-2.500v5z"/><path d="M1760 630A13 13 0 0 1 1767 647M1752 652A13 13 0 0 1 1745 636"/></g>

<rect x="1486" y="670" width="411" height="17" fill="#31558a"/>
<text x="1489" y="684" class="h">Параметры</text><use href="#up" x="1891" y="676"/>

<text x="1489" y="705" class="l">Имя:</text><rect x="1563.500" y="690.500" width="169" height="20" class="f"/><text x="1569" y="705" class="v">кукуруза 3</text>
<text x="1489" y="729" class="l">Инструмент:</text><rect x="1563.500" y="715.500" width="169" height="20" class="f"/><text x="1569" y="729" class="v">кукуруза 3</text>
<text x="1489" y="750" class="l">Номер</text><text x="1489" y="763" class="l">Инструмента:</text><rect x="1563.500" y="742.500" width="69" height="20" class="f"/><text x="1569" y="757" class="v">1</text>
<text x="1489" y="784" class="l">Точность:</text><rect x="1563.500" y="769.500" width="69" height="20" class="f"/><text x="1569" y="784" class="v">0.025</text>
<text x="1489" y="805" class="l">Рабочая</text><text x="1489" y="818" class="l">подача:</text><rect x="1563.500" y="797.500" width="69" height="20" class="f"/><text x="1569" y="811" class="v">60</text>
<text x="1489" y="835" class="l">Подача</text><text x="1489" y="848" class="l">врезания:</text><rect x="1563.500" y="826.500" width="69" height="20" class="f"/><text x="1569" y="841" class="v">30</text>
<text x="1489" y="864" class="l">Частота</text><text x="1489" y="877" class="l">вращения:</text><rect x="1563.500" y="856.500" width="69" height="20" class="f"/><text x="1569" y="871" class="v">15000</text>
<text x="1489" y="898" class="l">Комментарии:</text><rect x="1563.500" y="884.500" width="169" height="19" class="f"/><text x="1569" y="898" class="v">Выборка</text>
<text x="1489" y="920" class="l">Цвет</text><text x="1489" y="933" class="l">симуляции:</text>
<rect x="1618" y="945" width="74" height="23" fill="#565656"/><text x="1655" y="961" text-anchor="middle" class="v" style="fill:#d8d8d8">Применить</text>
<rect x="1706" y="945" width="59" height="23" fill="#565656"/><text x="1735.500" y="961" text-anchor="middle" class="v" style="fill:#d8d8d8">Вернуть</text>
<rect x="1486" y="994" width="411" height="17" fill="#31558a"/>
<text x="1489" y="1008" class="h">Параметры пользователя</text><use href="#dn" x="1891" y="1001"/>

<!-- status -->
<text x="1544" y="1156" class="st">X: 85.791</text><text x="1620" y="1156" class="st">Y: -200.207</text><text x="1696" y="1156" class="st">Z: 0.000</text>
<text x="1772" y="1156" class="st" style="fill:#666">W:</text><text x="1848" y="1156" class="st" style="fill:#666">H:</text>
</svg>
</body></html>
